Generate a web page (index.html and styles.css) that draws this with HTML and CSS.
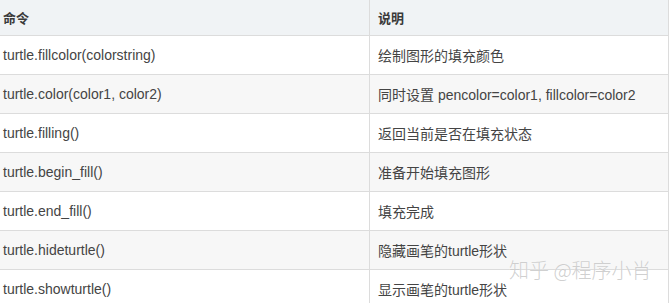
FILE: index.html
```html
<!DOCTYPE html>
<html lang="zh">
<head>
<meta charset="utf-8">
<link rel="stylesheet" href="styles.css">
</head>
<body>
<div class="page">
  <div class="grid">
    <div class="cell head c1">命令</div>
    <div class="cell head c2">说明</div>

    <div class="cell c1">turtle.fillcolor(colorstring)</div>
    <div class="cell c2">绘制图形的填充颜色</div>

    <div class="cell c1 alt">turtle.color(color1, color2)</div>
    <div class="cell c2 alt">同时设置 pencolor=color1, fillcolor=color2</div>

    <div class="cell c1">turtle.filling()</div>
    <div class="cell c2">返回当前是否在填充状态</div>

    <div class="cell c1 alt">turtle.begin_fill()</div>
    <div class="cell c2 alt">准备开始填充图形</div>

    <div class="cell c1">turtle.end_fill()</div>
    <div class="cell c2">填充完成</div>

    <div class="cell c1 alt">turtle.hideturtle()</div>
    <div class="cell c2 alt">隐藏画笔的turtle形状</div>

    <div class="cell c1">turtle.showturtle()</div>
    <div class="cell c2">显示画笔的turtle形状</div>
  </div>
  <div class="watermark">知乎 @程序小肖</div>
</div>
</body>
</html>
```

FILE: styles.css
```css
html, body {
  margin: 0;
  padding: 0;
  background: #ffffff;
}
.page {
  position: relative;
  width: 669px;
  height: 303px;
  overflow: hidden;
  font-family: "Liberation Sans", "Noto Sans CJK SC", sans-serif;
  color: #444444;
}
.grid {
  display: grid;
  grid-template-columns: 370px 299px;
}
.cell {
  box-sizing: border-box;
  height: 39px;
  display: flex;
  align-items: center;
  font-size: 14px;
  border-bottom: 1px solid #dcdcdc;
  background: #ffffff;
  white-space: nowrap;
}
.cell.alt {
  background: #f7f7f7;
}
.cell.head {
  height: 36px;
  background: #f0f3f5;
  font-weight: bold;
  font-size: 13px;
  color: #3a3a3a;
}
.c1 {
  border-right: 1px solid #dcdcdc;
  padding-left: 3px;
}
.c2 {
  border-right: 1px solid #dcdcdc;
  padding-left: 8px;
}
.watermark {
  position: absolute;
  left: 509px;
  top: 255px;
  font-family: "Noto Sans CJK SC", sans-serif;
  font-weight: 300;
  font-size: 20px;
  color: rgba(195, 195, 195, 0.8);
  text-shadow: 0 0 1px rgba(255, 255, 255, 0.9);
}
```
